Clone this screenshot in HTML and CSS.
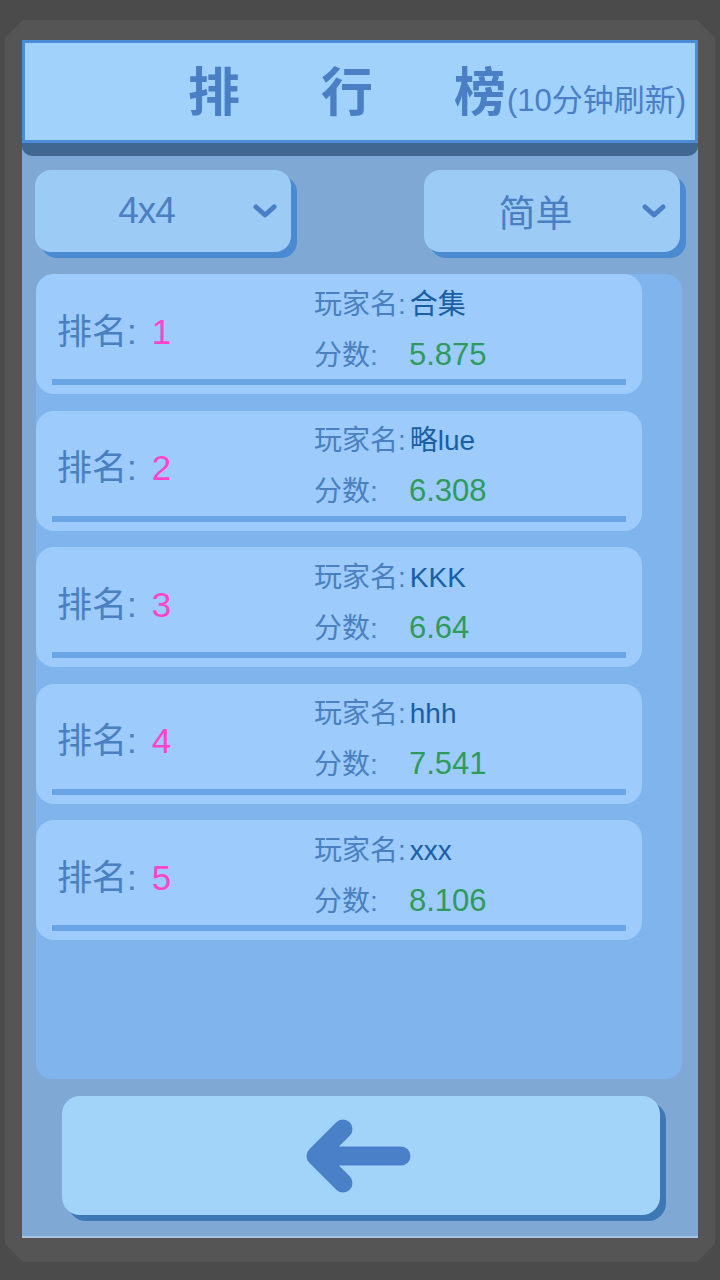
FILE: index.html
```html
<!DOCTYPE html>
<html lang="zh">
<head>
    <meta charset="UTF-8">
    <meta name="viewport" content="width=device-width, initial-scale=1.0">
    <title>排行榜</title>
    <link rel="stylesheet" href="styles.css">
</head>
<body>
    <div class="frame">
        <div class="panel">
            <div class="header">
                <span class="title">排行<span class="title-last">榜</span></span><span class="subtitle">(10分钟刷新)</span>
            </div>
            <div class="header-shadow"></div>

            <div class="select-row">
                <div class="select">
                    <span class="select-text size">4x4</span>
                    <svg class="chevron" viewBox="0 0 26 18"><path d="M4 5 L13 13 L22 5"/></svg>
                </div>
                <div class="select">
                    <span class="select-text">简单</span>
                    <svg class="chevron" viewBox="0 0 26 18"><path d="M4 5 L13 13 L22 5"/></svg>
                </div>
            </div>

            <div class="rank-list">
                <div class="rank-item">
                    <div class="rank-body">
                        <div class="rank">排名:<span class="rank-num">1</span></div>
                        <div class="info">
                            <div class="info-line"><span class="label">玩家名:</span><span class="player">合集</span></div>
                            <div class="info-line"><span class="label score-label">分数:</span><span class="score">5.875</span></div>
                        </div>
                    </div>
                    <div class="rank-line"></div>
                </div>
                <div class="rank-item">
                    <div class="rank-body">
                        <div class="rank">排名:<span class="rank-num">2</span></div>
                        <div class="info">
                            <div class="info-line"><span class="label">玩家名:</span><span class="player">略lue</span></div>
                            <div class="info-line"><span class="label score-label">分数:</span><span class="score">6.308</span></div>
                        </div>
                    </div>
                    <div class="rank-line"></div>
                </div>
                <div class="rank-item">
                    <div class="rank-body">
                        <div class="rank">排名:<span class="rank-num">3</span></div>
                        <div class="info">
                            <div class="info-line"><span class="label">玩家名:</span><span class="player">KKK</span></div>
                            <div class="info-line"><span class="label score-label">分数:</span><span class="score">6.64</span></div>
                        </div>
                    </div>
                    <div class="rank-line"></div>
                </div>
                <div class="rank-item">
                    <div class="rank-body">
                        <div class="rank">排名:<span class="rank-num">4</span></div>
                        <div class="info">
                            <div class="info-line"><span class="label">玩家名:</span><span class="player">hhh</span></div>
                            <div class="info-line"><span class="label score-label">分数:</span><span class="score">7.541</span></div>
                        </div>
                    </div>
                    <div class="rank-line"></div>
                </div>
                <div class="rank-item">
                    <div class="rank-body">
                        <div class="rank">排名:<span class="rank-num">5</span></div>
                        <div class="info">
                            <div class="info-line"><span class="label">玩家名:</span><span class="player">xxx</span></div>
                            <div class="info-line"><span class="label score-label">分数:</span><span class="score">8.106</span></div>
                        </div>
                    </div>
                    <div class="rank-line"></div>
                </div>
            </div>

            <div class="back-row">
                <button class="back-button">
                    <svg class="arrow" viewBox="0 0 110 76"><path d="M97 38 H12 M39 11 L12 38 L39 65"/></svg>
                </button>
            </div>
        </div>
    </div>
</body>
</html>
```

FILE: styles.css
```css
body {
    margin: 0;
    width: 720px;
    height: 1280px;
    background: #4b4b4b;
    font-family: 'Liberation Sans', 'Noto Sans CJK SC', sans-serif;
    overflow: hidden;
}

.frame {
    margin: 20px 5px 18px;
    height: 1242px;
    padding: 20px 17px 0;
    box-sizing: border-box;
    background: #555555;
    clip-path: polygon(18px 0, calc(100% - 18px) 0, 100% 18px, 100% calc(100% - 18px), calc(100% - 18px) 100%, 18px 100%, 0 calc(100% - 18px), 0 18px);
}

.panel {
    height: 1198px;
    background: #80a8d4;
    border-bottom: 2px solid #a9c4e2;
    box-sizing: border-box;
    display: flex;
    flex-direction: column;
}

.header {
    height: 103px;
    box-sizing: border-box;
    background: #a0d2fb;
    border: 3px solid #4a8cd6;
    display: flex;
    align-items: baseline;
    padding: 20px 0 0 163px;
    color: #4a7fc6;
}

.title {
    font-size: 52px;
    font-weight: bold;
    letter-spacing: 81px;
    line-height: 60px;
}

.title-last {
    letter-spacing: 0;
}

.subtitle {
    font-size: 31px;
    margin-left: 1px;
}

.header-shadow {
    height: 13px;
    background: #3f6791;
    border-radius: 0 0 10px 10px;
}

.select-row {
    display: flex;
    justify-content: space-between;
    padding: 14px 18px 0 13px;
}

.select {
    width: 256px;
    height: 82px;
    background: #9ccbf6;
    border-radius: 16px;
    box-shadow: 6px 6px 0 #4a8ad0;
    display: flex;
    align-items: center;
    color: #4a7fc2;
}

.select-text {
    flex: 1;
    text-align: center;
    font-size: 37px;
    padding-left: 6px;
}

.select-text.size {
    font-size: 37px;
    letter-spacing: -1px;
}

.chevron {
    width: 26px;
    height: 18px;
    margin-right: 13px;
    fill: none;
    stroke: #4a7fc6;
    stroke-width: 5;
    stroke-linecap: round;
    stroke-linejoin: round;
}

.rank-list {
    margin: 22px 16px 0 14px;
    height: 805px;
    background: #80b4ec;
    border-radius: 16px;
    display: flex;
    flex-direction: column;
    gap: 16.5px;
    padding-right: 40px;
}

.rank-item {
    height: 120px;
    background: #9ccbfc;
    border-radius: 18px;
    display: flex;
    flex-direction: column;
    box-sizing: border-box;
    padding: 0 16px 9px;
}

.rank-body {
    flex: 1;
    display: flex;
    align-items: center;
}

.rank {
    width: 257px;
    padding-left: 5px;
    font-size: 35px;
    color: #4a7fc0;
    margin-top: 3px;
}

.rank-num {
    color: #ff44cc;
    margin-left: 15px;
}

.info {
    display: flex;
    flex-direction: column;
    gap: 14px;
    margin-top: -2px;
}

.info-line {
    display: flex;
    align-items: baseline;
    height: 37px;
}

.label {
    font-size: 28px;
    color: #4a7fc0;
}

.score-label {
    width: 95px;
}

.player {
    font-size: 28px;
    color: #1a5ea4;
    margin-left: 4px;
}

.score {
    font-size: 31px;
    color: #2f9a5c;
}

.rank-line {
    height: 6px;
    background: #6aa6e6;
}

.back-row {
    padding: 17px 0 0 40px;
}

.back-button {
    width: 598px;
    height: 119px;
    border: none;
    background: #a2d4fa;
    border-radius: 18px;
    box-shadow: 6px 6px 0 #3d78b5;
    display: flex;
    align-items: center;
    justify-content: center;
    padding: 0;
}

.arrow {
    width: 110px;
    height: 76px;
    margin-right: 4px;
    fill: none;
    stroke: #4a80c8;
    stroke-width: 19;
    stroke-linecap: round;
    stroke-linejoin: round;
}
```
